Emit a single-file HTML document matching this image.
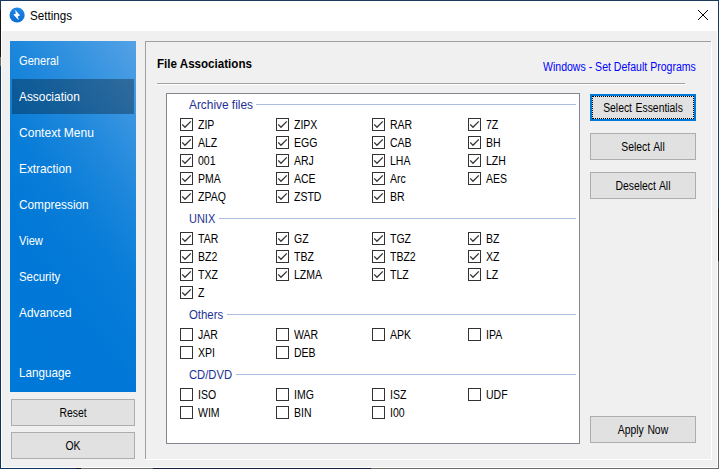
<!DOCTYPE html><html><head><meta charset="utf-8"><title>Settings</title><style>
*{margin:0;padding:0;box-sizing:border-box}
html,body{width:719px;height:469px;overflow:hidden;background:#f0f0f0}
body{position:relative;font-family:"Liberation Sans",sans-serif;font-size:12px;color:#000}
.a{position:absolute}
.t{position:absolute;white-space:nowrap;line-height:1;transform-origin:0 0}
.ms{font-size:12px;transform:scaleX(0.865)}
.btn{position:absolute;background:#e1e1e1;border:1px solid #adadad}
.btn span{position:absolute;left:0;right:0;top:7px;word-spacing:0.8px;text-align:center;line-height:1;font-size:12px;white-space:nowrap;transform:scaleX(0.865);transform-origin:50% 0}
.nav{position:absolute;left:19.4px;color:#fff;font-size:12.6px;white-space:nowrap;line-height:1;transform-origin:0 0}
.cb{position:absolute;width:13px;height:13px;border:1px solid #333;background:#fff}
.cb svg{position:absolute;left:-1px;top:-1px}
.lb{position:absolute;white-space:nowrap;line-height:1;font-size:12px;transform:scaleX(0.876);transform-origin:0 0}
.gh{position:absolute;left:188.9px;white-space:nowrap;line-height:1;font-size:12px;color:#1e3296;transform-origin:0 0}
.gl{position:absolute;height:1px;background:#adbde1}
</style></head><body>
<div class="a" style="left:0;top:0;width:719px;height:31px;background:#fff"></div>
<div class="a" style="left:0;top:0;width:719px;height:1px;background:#1b3a5e"></div>
<div class="a" style="left:0;top:0;width:1px;height:469px;background:linear-gradient(#1b3a5e 0 10px,#151515 10px 57px,#707070 57px 66px,#10345a 66px)"></div>
<div class="a" style="left:717px;top:31px;width:1px;height:437px;background:#fff"></div>
<div class="a" style="left:1px;top:31px;width:1px;height:437px;background:#fff"></div>
<div class="a" style="left:1px;top:467px;width:717px;height:1px;background:#fff"></div>
<div class="a" style="left:718px;top:0;width:1px;height:469px;background:linear-gradient(#1b3a5e 0 209px,#1a1a1a 209px 261px,#6e6e6e 261px)"></div>
<div class="a" style="left:0;top:468px;width:719px;height:1px;background:linear-gradient(90deg,#10345a 0 76px,#111 76px 81px,#6e6e6e 81px 153px,#16203f 153px 371px,#6c6c6c 371px)"></div>
<svg class="a" style="left:8px;top:6px" width="18" height="18" viewBox="0 0 18 18"><defs><linearGradient id="ig" x1="0" y1="0" x2="0" y2="1"><stop offset="0" stop-color="#1f8ae8"/><stop offset="1" stop-color="#0b6cd4"/></linearGradient></defs><circle cx="9.1" cy="9" r="7.6" fill="url(#ig)"/><path d="M7.2 3.8 L12.1 9.4 L9.8 10.3 L10.8 14.2 L5.3 8.6 L7.8 7.7 Z" fill="#fff"/></svg>
<div class="t" id="ttl" style="left:30.3px;top:10px;font-size:12px;transform:scaleX(0.967)">Settings</div>
<svg class="a" style="left:697px;top:9px" width="12" height="12" viewBox="0 0 12 12"><path d="M1 1 L11 11 M11 1 L1 11" stroke="#000" stroke-width="1" fill="none"/></svg>
<div class="a" style="left:10px;top:41px;width:126px;height:351px;background:linear-gradient(233deg,#54a2e5 0%,#1d87dc 32%,#097dd8 48%,#0178d7 67%,#0078d7 83%)"></div>
<div class="a" style="left:12px;top:79px;width:122px;height:35px;background:rgba(2,9,15,0.33)"></div>
<div class="nav" style="top:55px;transform:scaleX(0.884)">General</div>
<div class="nav" style="top:91px;transform:scaleX(0.944)">Association</div>
<div class="nav" style="top:127px;transform:scaleX(0.956)">Context Menu</div>
<div class="nav" style="top:163px;transform:scaleX(0.939)">Extraction</div>
<div class="nav" style="top:199px;transform:scaleX(0.939)">Compression</div>
<div class="nav" style="top:235px;transform:scaleX(0.882)">View</div>
<div class="nav" style="top:271px;transform:scaleX(0.907)">Security</div>
<div class="nav" style="top:307px;transform:scaleX(0.939)">Advanced</div>
<div class="nav" style="top:367px;transform:scaleX(0.927)">Language</div>
<div class="btn" style="left:11px;top:399px;width:124px;height:27px"><span>Reset</span></div>
<div class="btn" style="left:11px;top:432px;width:124px;height:27px"><span>OK</span></div>
<div class="a" style="left:145px;top:41px;width:566px;height:1px;background:#a0a0a0"></div>
<div class="a" style="left:145px;top:41px;width:1px;height:418px;background:#a0a0a0"></div>
<div class="a" style="left:711px;top:41px;width:1px;height:419px;background:#fff"></div>
<div class="a" style="left:145px;top:459px;width:567px;height:1px;background:#fff"></div>
<div class="t" id="fa" style="left:157.2px;top:58px;font-size:12px;font-weight:bold;transform:scaleX(0.966)">File Associations</div>
<div class="t" id="lnk" style="left:543px;top:61px;font-size:12px;color:#0000ff;transform:scaleX(0.878)">Windows - Set Default Programs</div>
<div class="a" style="left:157px;top:83px;width:528px;height:1px;background:#a0a0a0"></div>
<div class="a" style="left:157px;top:84px;width:528px;height:1px;background:#fff"></div>
<div class="btn" style="left:590px;top:94px;width:106px;height:27px;border:2px solid #0078d7"><span style="top:6px">Select Essentials</span><div class="a" style="left:0;top:0;right:0;bottom:0;border:1px dotted #000"></div></div>
<div class="btn" style="left:590px;top:133px;width:106px;height:27px"><span>Select All</span></div>
<div class="btn" style="left:590px;top:172px;width:106px;height:27px"><span>Deselect All</span></div>
<div class="btn" style="left:590px;top:416px;width:106px;height:27px"><span>Apply Now</span></div>
<div class="a" style="left:166px;top:93px;width:414px;height:351px;border:1px solid #828790;background:#fff"></div>
<div class="gh" style="top:99px;transform:scaleX(0.989)">Archive files</div>
<div class="gl" style="left:256px;top:104px;width:320px"></div>
<div class="cb" style="left:180px;top:118px"><svg width="13" height="13" viewBox="0 0 13 13"><path d="M2.2 6.4 L5 9.3 L10.8 3.4" stroke="#333" stroke-width="1.25" fill="none"/></svg></div>
<div class="lb" style="left:198px;top:119px">ZIP</div>
<div class="cb" style="left:276px;top:118px"><svg width="13" height="13" viewBox="0 0 13 13"><path d="M2.2 6.4 L5 9.3 L10.8 3.4" stroke="#333" stroke-width="1.25" fill="none"/></svg></div>
<div class="lb" style="left:294px;top:119px">ZIPX</div>
<div class="cb" style="left:372px;top:118px"><svg width="13" height="13" viewBox="0 0 13 13"><path d="M2.2 6.4 L5 9.3 L10.8 3.4" stroke="#333" stroke-width="1.25" fill="none"/></svg></div>
<div class="lb" style="left:390px;top:119px">RAR</div>
<div class="cb" style="left:468px;top:118px"><svg width="13" height="13" viewBox="0 0 13 13"><path d="M2.2 6.4 L5 9.3 L10.8 3.4" stroke="#333" stroke-width="1.25" fill="none"/></svg></div>
<div class="lb" style="left:486px;top:119px">7Z</div>
<div class="cb" style="left:180px;top:136px"><svg width="13" height="13" viewBox="0 0 13 13"><path d="M2.2 6.4 L5 9.3 L10.8 3.4" stroke="#333" stroke-width="1.25" fill="none"/></svg></div>
<div class="lb" style="left:198px;top:137px">ALZ</div>
<div class="cb" style="left:276px;top:136px"><svg width="13" height="13" viewBox="0 0 13 13"><path d="M2.2 6.4 L5 9.3 L10.8 3.4" stroke="#333" stroke-width="1.25" fill="none"/></svg></div>
<div class="lb" style="left:294px;top:137px">EGG</div>
<div class="cb" style="left:372px;top:136px"><svg width="13" height="13" viewBox="0 0 13 13"><path d="M2.2 6.4 L5 9.3 L10.8 3.4" stroke="#333" stroke-width="1.25" fill="none"/></svg></div>
<div class="lb" style="left:390px;top:137px">CAB</div>
<div class="cb" style="left:468px;top:136px"><svg width="13" height="13" viewBox="0 0 13 13"><path d="M2.2 6.4 L5 9.3 L10.8 3.4" stroke="#333" stroke-width="1.25" fill="none"/></svg></div>
<div class="lb" style="left:486px;top:137px">BH</div>
<div class="cb" style="left:180px;top:154px"><svg width="13" height="13" viewBox="0 0 13 13"><path d="M2.2 6.4 L5 9.3 L10.8 3.4" stroke="#333" stroke-width="1.25" fill="none"/></svg></div>
<div class="lb" style="left:198px;top:155px">001</div>
<div class="cb" style="left:276px;top:154px"><svg width="13" height="13" viewBox="0 0 13 13"><path d="M2.2 6.4 L5 9.3 L10.8 3.4" stroke="#333" stroke-width="1.25" fill="none"/></svg></div>
<div class="lb" style="left:294px;top:155px">ARJ</div>
<div class="cb" style="left:372px;top:154px"><svg width="13" height="13" viewBox="0 0 13 13"><path d="M2.2 6.4 L5 9.3 L10.8 3.4" stroke="#333" stroke-width="1.25" fill="none"/></svg></div>
<div class="lb" style="left:390px;top:155px">LHA</div>
<div class="cb" style="left:468px;top:154px"><svg width="13" height="13" viewBox="0 0 13 13"><path d="M2.2 6.4 L5 9.3 L10.8 3.4" stroke="#333" stroke-width="1.25" fill="none"/></svg></div>
<div class="lb" style="left:486px;top:155px">LZH</div>
<div class="cb" style="left:180px;top:172px"><svg width="13" height="13" viewBox="0 0 13 13"><path d="M2.2 6.4 L5 9.3 L10.8 3.4" stroke="#333" stroke-width="1.25" fill="none"/></svg></div>
<div class="lb" style="left:198px;top:173px">PMA</div>
<div class="cb" style="left:276px;top:172px"><svg width="13" height="13" viewBox="0 0 13 13"><path d="M2.2 6.4 L5 9.3 L10.8 3.4" stroke="#333" stroke-width="1.25" fill="none"/></svg></div>
<div class="lb" style="left:294px;top:173px">ACE</div>
<div class="cb" style="left:372px;top:172px"><svg width="13" height="13" viewBox="0 0 13 13"><path d="M2.2 6.4 L5 9.3 L10.8 3.4" stroke="#333" stroke-width="1.25" fill="none"/></svg></div>
<div class="lb" style="left:390px;top:173px">Arc</div>
<div class="cb" style="left:468px;top:172px"><svg width="13" height="13" viewBox="0 0 13 13"><path d="M2.2 6.4 L5 9.3 L10.8 3.4" stroke="#333" stroke-width="1.25" fill="none"/></svg></div>
<div class="lb" style="left:486px;top:173px">AES</div>
<div class="cb" style="left:180px;top:190px"><svg width="13" height="13" viewBox="0 0 13 13"><path d="M2.2 6.4 L5 9.3 L10.8 3.4" stroke="#333" stroke-width="1.25" fill="none"/></svg></div>
<div class="lb" style="left:198px;top:191px">ZPAQ</div>
<div class="cb" style="left:276px;top:190px"><svg width="13" height="13" viewBox="0 0 13 13"><path d="M2.2 6.4 L5 9.3 L10.8 3.4" stroke="#333" stroke-width="1.25" fill="none"/></svg></div>
<div class="lb" style="left:294px;top:191px">ZSTD</div>
<div class="cb" style="left:372px;top:190px"><svg width="13" height="13" viewBox="0 0 13 13"><path d="M2.2 6.4 L5 9.3 L10.8 3.4" stroke="#333" stroke-width="1.25" fill="none"/></svg></div>
<div class="lb" style="left:390px;top:191px">BR</div>
<div class="gh" style="top:213px;transform:scaleX(0.914)">UNIX</div>
<div class="gl" style="left:219px;top:218px;width:357px"></div>
<div class="cb" style="left:180px;top:232px"><svg width="13" height="13" viewBox="0 0 13 13"><path d="M2.2 6.4 L5 9.3 L10.8 3.4" stroke="#333" stroke-width="1.25" fill="none"/></svg></div>
<div class="lb" style="left:198px;top:233px">TAR</div>
<div class="cb" style="left:276px;top:232px"><svg width="13" height="13" viewBox="0 0 13 13"><path d="M2.2 6.4 L5 9.3 L10.8 3.4" stroke="#333" stroke-width="1.25" fill="none"/></svg></div>
<div class="lb" style="left:294px;top:233px">GZ</div>
<div class="cb" style="left:372px;top:232px"><svg width="13" height="13" viewBox="0 0 13 13"><path d="M2.2 6.4 L5 9.3 L10.8 3.4" stroke="#333" stroke-width="1.25" fill="none"/></svg></div>
<div class="lb" style="left:390px;top:233px">TGZ</div>
<div class="cb" style="left:468px;top:232px"><svg width="13" height="13" viewBox="0 0 13 13"><path d="M2.2 6.4 L5 9.3 L10.8 3.4" stroke="#333" stroke-width="1.25" fill="none"/></svg></div>
<div class="lb" style="left:486px;top:233px">BZ</div>
<div class="cb" style="left:180px;top:250px"><svg width="13" height="13" viewBox="0 0 13 13"><path d="M2.2 6.4 L5 9.3 L10.8 3.4" stroke="#333" stroke-width="1.25" fill="none"/></svg></div>
<div class="lb" style="left:198px;top:251px">BZ2</div>
<div class="cb" style="left:276px;top:250px"><svg width="13" height="13" viewBox="0 0 13 13"><path d="M2.2 6.4 L5 9.3 L10.8 3.4" stroke="#333" stroke-width="1.25" fill="none"/></svg></div>
<div class="lb" style="left:294px;top:251px">TBZ</div>
<div class="cb" style="left:372px;top:250px"><svg width="13" height="13" viewBox="0 0 13 13"><path d="M2.2 6.4 L5 9.3 L10.8 3.4" stroke="#333" stroke-width="1.25" fill="none"/></svg></div>
<div class="lb" style="left:390px;top:251px">TBZ2</div>
<div class="cb" style="left:468px;top:250px"><svg width="13" height="13" viewBox="0 0 13 13"><path d="M2.2 6.4 L5 9.3 L10.8 3.4" stroke="#333" stroke-width="1.25" fill="none"/></svg></div>
<div class="lb" style="left:486px;top:251px">XZ</div>
<div class="cb" style="left:180px;top:268px"><svg width="13" height="13" viewBox="0 0 13 13"><path d="M2.2 6.4 L5 9.3 L10.8 3.4" stroke="#333" stroke-width="1.25" fill="none"/></svg></div>
<div class="lb" style="left:198px;top:269px">TXZ</div>
<div class="cb" style="left:276px;top:268px"><svg width="13" height="13" viewBox="0 0 13 13"><path d="M2.2 6.4 L5 9.3 L10.8 3.4" stroke="#333" stroke-width="1.25" fill="none"/></svg></div>
<div class="lb" style="left:294px;top:269px">LZMA</div>
<div class="cb" style="left:372px;top:268px"><svg width="13" height="13" viewBox="0 0 13 13"><path d="M2.2 6.4 L5 9.3 L10.8 3.4" stroke="#333" stroke-width="1.25" fill="none"/></svg></div>
<div class="lb" style="left:390px;top:269px">TLZ</div>
<div class="cb" style="left:468px;top:268px"><svg width="13" height="13" viewBox="0 0 13 13"><path d="M2.2 6.4 L5 9.3 L10.8 3.4" stroke="#333" stroke-width="1.25" fill="none"/></svg></div>
<div class="lb" style="left:486px;top:269px">LZ</div>
<div class="cb" style="left:180px;top:286px"><svg width="13" height="13" viewBox="0 0 13 13"><path d="M2.2 6.4 L5 9.3 L10.8 3.4" stroke="#333" stroke-width="1.25" fill="none"/></svg></div>
<div class="lb" style="left:198px;top:287px">Z</div>
<div class="gh" style="top:309px;transform:scaleX(0.950)">Others</div>
<div class="gl" style="left:227px;top:314px;width:349px"></div>
<div class="cb" style="left:180px;top:328px"></div>
<div class="lb" style="left:198px;top:329px">JAR</div>
<div class="cb" style="left:276px;top:328px"></div>
<div class="lb" style="left:294px;top:329px">WAR</div>
<div class="cb" style="left:372px;top:328px"></div>
<div class="lb" style="left:390px;top:329px">APK</div>
<div class="cb" style="left:468px;top:328px"></div>
<div class="lb" style="left:486px;top:329px">IPA</div>
<div class="cb" style="left:180px;top:346px"></div>
<div class="lb" style="left:198px;top:347px">XPI</div>
<div class="cb" style="left:276px;top:346px"></div>
<div class="lb" style="left:294px;top:347px">DEB</div>
<div class="gh" style="top:369px;transform:scaleX(0.937)">CD/DVD</div>
<div class="gl" style="left:236px;top:374px;width:340px"></div>
<div class="cb" style="left:180px;top:388px"></div>
<div class="lb" style="left:198px;top:389px">ISO</div>
<div class="cb" style="left:276px;top:388px"></div>
<div class="lb" style="left:294px;top:389px">IMG</div>
<div class="cb" style="left:372px;top:388px"></div>
<div class="lb" style="left:390px;top:389px">ISZ</div>
<div class="cb" style="left:468px;top:388px"></div>
<div class="lb" style="left:486px;top:389px">UDF</div>
<div class="cb" style="left:180px;top:406px"></div>
<div class="lb" style="left:198px;top:407px">WIM</div>
<div class="cb" style="left:276px;top:406px"></div>
<div class="lb" style="left:294px;top:407px">BIN</div>
<div class="cb" style="left:372px;top:406px"></div>
<div class="lb" style="left:390px;top:407px">I00</div>
</body></html>
